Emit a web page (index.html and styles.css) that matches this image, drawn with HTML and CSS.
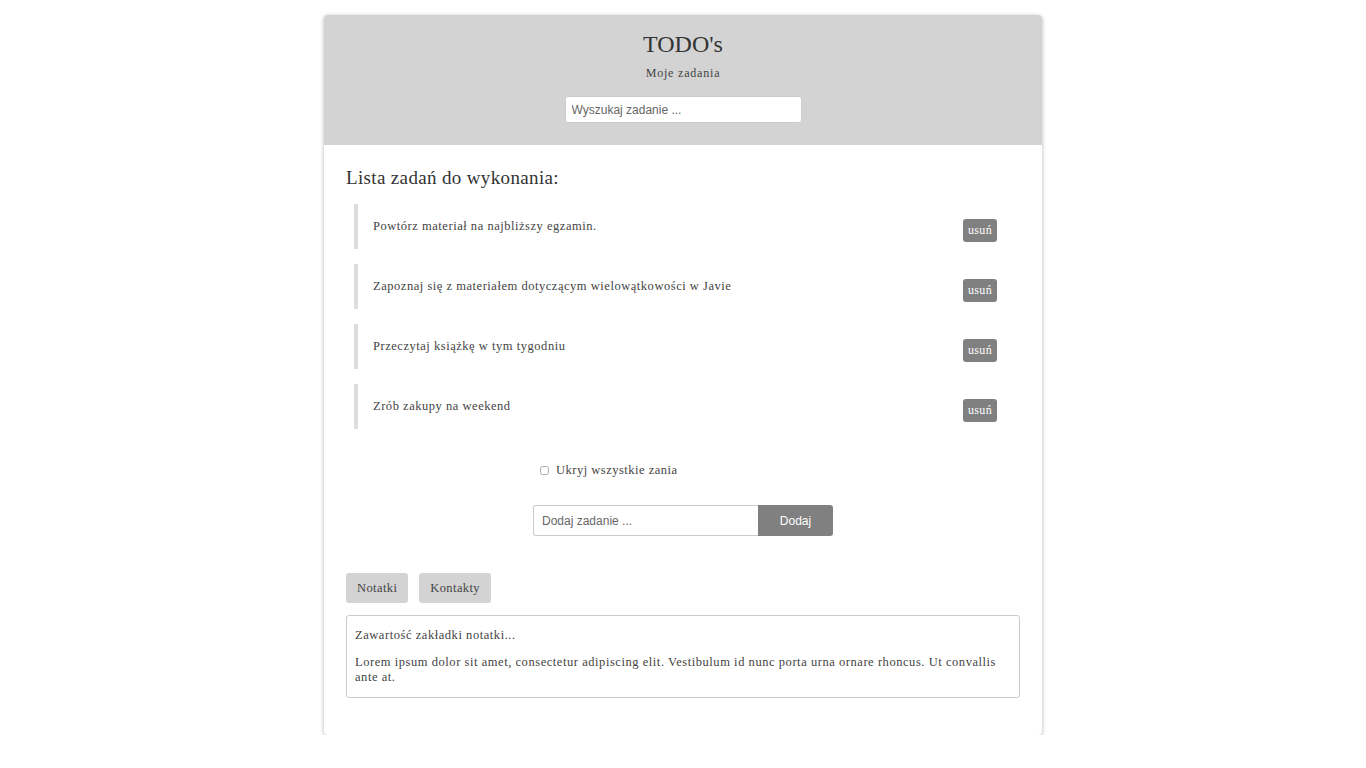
FILE: index.html
```html
<!DOCTYPE html>
<html lang="pl">
<head>
<meta charset="utf-8">
<title>TODO's</title>
<link rel="stylesheet" href="styles.css">
</head>
<body>
<div class="app">
  <header class="head">
    <h1 class="title">TODO's</h1>
    <p class="subtitle">Moje zadania</p>
    <input class="search" type="text" placeholder="Wyszukaj zadanie ...">
  </header>
  <main class="content">
    <h2 class="list-title">Lista zadań do wykonania:</h2>
    <ul class="tasks">
      <li class="task"><span class="task-text">Powtórz materiał na najbliższy egzamin.</span><button class="remove">usuń</button></li>
      <li class="task"><span class="task-text">Zapoznaj się z materiałem dotyczącym wielowątkowości w Javie</span><button class="remove">usuń</button></li>
      <li class="task"><span class="task-text">Przeczytaj książkę w tym tygodniu</span><button class="remove">usuń</button></li>
      <li class="task"><span class="task-text">Zrób zakupy na weekend</span><button class="remove">usuń</button></li>
    </ul>
    <label class="hide-all"><input type="checkbox" class="check"> Ukryj wszystkie zania</label>
    <div class="add-row">
      <input class="add-input" type="text" placeholder="Dodaj zadanie ..."><button class="add-btn">Dodaj</button>
    </div>
    <div class="tabs">
      <button class="tab">Notatki</button>
      <button class="tab">Kontakty</button>
    </div>
    <div class="panel">
      <p>Zawartość zakładki notatki...</p>
      <p>Lorem ipsum dolor sit amet, consectetur adipiscing elit. Vestibulum id nunc porta urna ornare rhoncus. Ut convallis ante at.</p>
    </div>
  </main>
</div>
</body>
</html>
```
FILE: styles.css
```css
* { box-sizing: border-box; }
body {
  margin: 0;
  background: #fff;
  font-family: "Liberation Serif", "Times New Roman", serif;
  color: #444;
}
.app {
  width: 718px;
  margin: 15px auto 0;
  border-radius: 4px;
  box-shadow: 0 1px 4px rgba(0,0,0,0.3);
  overflow: hidden;
  background: #fff;
}
.head {
  background: #d3d3d3;
  text-align: center;
  padding: 15px 0 22px;
}
.title {
  margin: 0;
  font-size: 24px;
  font-weight: normal;
  line-height: 28px;
  color: #333;
}
.subtitle {
  margin: 7px 0 15px;
  font-size: 12px;
  letter-spacing: 0.8px;
  line-height: 16px;
  color: #444;
}
.search {
  width: 237px;
  height: 27px;
  border: 1px solid #ccc;
  border-radius: 3px;
  padding: 0 6px;
  font-family: "Liberation Sans", Arial, sans-serif;
  font-size: 12px;
  color: #555;
}
.search::placeholder, .add-input::placeholder { color: #666; }
.content {
  padding: 20px 22px 37px;
}
.list-title {
  margin: 0 0 13px;
  font-size: 19px;
  font-weight: normal;
  letter-spacing: 0.35px;
  line-height: 26px;
  color: #333;
}
.tasks {
  list-style: none;
  margin: 0;
  padding: 0 23px 0 8px;
}
.task {
  display: flex;
  justify-content: space-between;
  align-items: flex-start;
  height: 45px;
  margin-bottom: 15px;
  border-left: 4px solid #ddd;
  padding: 14px 0 0 15px;
}
.task-text {
  font-size: 12.5px;
  letter-spacing: 0.53px;
  line-height: 16px;
  color: #444;
}
.remove {
  margin-top: 1px;
  width: 34px;
  height: 23px;
  border: none;
  border-radius: 3px;
  background: #808080;
  color: #fff;
  font-family: "Liberation Serif", serif;
  font-size: 12px;
  letter-spacing: 0.3px;
  padding: 0;
}
.hide-all {
  display: flex;
  align-items: center;
  justify-content: flex-start;
  margin: 33px 0 0;
  padding-left: 194px;
  font-size: 12.5px;
  letter-spacing: 0.5px;
  height: 16px;
  color: #444;
}
.check {
  width: 9px;
  height: 9px;
  margin: 0 7px 0 0;
  opacity: 0.6;
}
.add-row {
  display: flex;
  justify-content: center;
  margin: 27px 0 0;
}
.add-input {
  width: 225px;
  height: 31px;
  border: 1px solid #ccc;
  border-right: none;
  border-radius: 3px 0 0 3px;
  padding: 0 8px;
  font-family: "Liberation Sans", Arial, sans-serif;
  font-size: 12px;
}
.add-btn {
  width: 75px;
  height: 31px;
  border: none;
  border-radius: 0 3px 3px 0;
  background: #808080;
  color: #fff;
  font-family: "Liberation Sans", Arial, sans-serif;
  font-size: 12px;
}
.tabs {
  display: flex;
  gap: 11px;
  margin-top: 37px;
}
.tab {
  height: 30px;
  padding: 0 11px;
  border: none;
  border-radius: 3px;
  background: #d3d3d3;
  color: #444;
  font-family: "Liberation Serif", serif;
  font-size: 12.5px;
  letter-spacing: 0.4px;
}
.panel {
  margin-top: 12px;
  border: 1px solid #ccc;
  border-radius: 3px;
  padding: 12px 8px 12px;
}
.panel p {
  margin: 0;
  font-size: 12.5px;
  letter-spacing: 0.55px;
  line-height: 15px;
  color: #444;
}
.panel p + p { margin-top: 12px; }
```
